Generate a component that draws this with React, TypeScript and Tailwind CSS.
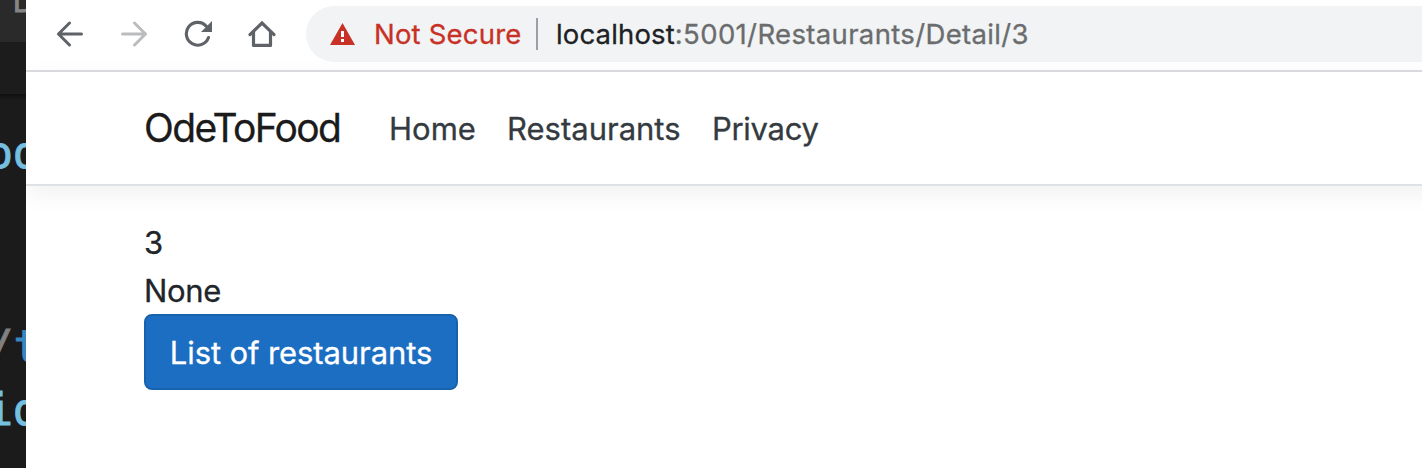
import React from "react";

function BackIcon({ className }: { className: string }) {
  return (
    <svg viewBox="0 0 28 26" className={className} fill="none" stroke="currentColor" strokeWidth="3" strokeLinecap="round" strokeLinejoin="round">
      <path d="M25.5 13H2.5M13.5 2L2.5 13L13.5 24" />
    </svg>
  );
}

function ReloadIcon() {
  return (
    <svg viewBox="0 0 28 28" className="h-7 w-7 text-[#5f6368]">
      <path d="M24.5 17.5A11.4 11.4 0 1 1 22.3 6.2" fill="none" stroke="currentColor" strokeWidth="3.1" strokeLinecap="round" />
      <path d="M28 1V12H17Z" fill="currentColor" />
    </svg>
  );
}

function HomeIcon() {
  return (
    <svg viewBox="0 0 28 28" className="h-7 w-7 text-[#5f6368]" fill="none" stroke="currentColor" strokeWidth="3.2">
      <path d="M2 14.6L14 3L26 14.6" strokeLinecap="round" />
      <path d="M5.5 12V25.4H22.5V12" strokeLinejoin="round" />
    </svg>
  );
}

function WarningIcon() {
  return (
    <svg viewBox="0 0 25 22" className="h-[22px] w-[25px] shrink-0">
      <path d="M12.5 0L25 22H0Z" fill="#c83126" />
      <path d="M11 8H14V14H11ZM11 16H14V19H11Z" fill="#fff" />
    </svg>
  );
}

function EditorStrip() {
  return (
    <aside className="relative h-[468px] w-[26px] shrink-0 overflow-hidden bg-[#1b1b1b] font-['DejaVu_Sans_Mono',monospace] text-[44px] leading-[52px] [-webkit-text-stroke:0.9px]">
      <div className="h-[42px] bg-[#2a2a2a]" />
      <div className="h-[52px] bg-[#1c1c1c]" />
      <div className="h-[6px] bg-linear-to-b from-[#101010] to-[#1b1b1b]" />
      <span className="absolute top-[-15px] left-[13px] font-['Liberation_Sans',sans-serif] text-[30px] leading-[34px] text-[#858585]">D</span>
      <span className="absolute top-[127px] left-[-13.6px] text-[#75bfe0]">od</span>
      <span className="absolute top-[321px] left-[-13px] text-[#808080]">/<span className="text-[#3a87bd]">t</span></span>
      <span className="absolute top-[384px] left-[-13.6px] text-[#75bfe0]">id</span>
      <span className="absolute top-[452px] left-[-13.6px] text-[#75bfe0]">oc</span>
    </aside>
  );
}

export default function App() {
  return (
    <div className="h-[468px] w-[1422px] overflow-hidden">
      <div className="flex h-full w-[1500px] bg-white font-['Inter',sans-serif] [-webkit-text-stroke:0.3px]">
        <EditorStrip />
        <div className="flex min-w-0 flex-1 flex-col">
          <div className="flex h-[72px] shrink-0 items-start border-b-2 border-[#dadce0] pl-[30px]">
            <div className="flex h-[68px] items-center">
              <BackIcon className="h-[26px] w-7 text-[#5f6368]" />
              <BackIcon className="ml-9 h-[26px] w-7 rotate-180 text-[#babcbe]" />
              <div className="ml-9"><ReloadIcon /></div>
              <div className="ml-9"><HomeIcon /></div>
            </div>
            <div className="mt-1.5 ml-[30px] flex h-14 flex-1 items-center rounded-l-full bg-[#f1f3f4] pl-6 text-[27.5px] whitespace-nowrap">
              <WarningIcon />
              <span className="ml-[19px] w-[162px] pt-0.5 tracking-[0.2px] text-[#c83126]">Not Secure</span>
              <span className="h-8 w-0.5 bg-[#9aa0a6]" />
              <span className="ml-[18px] pt-0.5 tracking-[0.15px] text-[#202124]">localhost</span>
              <span className="pt-0.5 tracking-[0.35px] text-[#6a6c6e]">:5001/Restaurants/Detail/3</span>
            </div>
          </div>
          <header className="flex h-[114px] shrink-0 items-center border-b-2 border-[#dee2e6] pt-0.5 pl-[118px] text-[31px] text-[#343a40] shadow-[0_8px_24px_rgba(0,0,0,0.06)]">
            <span className="-mt-0.5 w-[245px] text-[39px] tracking-[-1.65px] text-[#1b1b1b]">OdeToFood</span>
            <nav className="flex">
              <a className="w-[118px]">Home</a>
              <a className="w-[205px]">Restaurants</a>
              <a className="tracking-[-0.3px]">Privacy</a>
            </nav>
          </header>
          <main className="pt-8 pl-[118px] text-[31px] leading-[48px] text-[#212529]">
            <div className="pt-px">3</div>
            <div className="-mb-px tracking-[-0.3px]">None</div>
            <a className="flex h-[76px] w-[314px] items-center justify-center rounded-lg border-2 border-[#1861ac] bg-[#1b6ec2] pt-px tracking-[-0.1px] text-white">List of restaurants</a>
          </main>
        </div>
      </div>
    </div>
  );
}
